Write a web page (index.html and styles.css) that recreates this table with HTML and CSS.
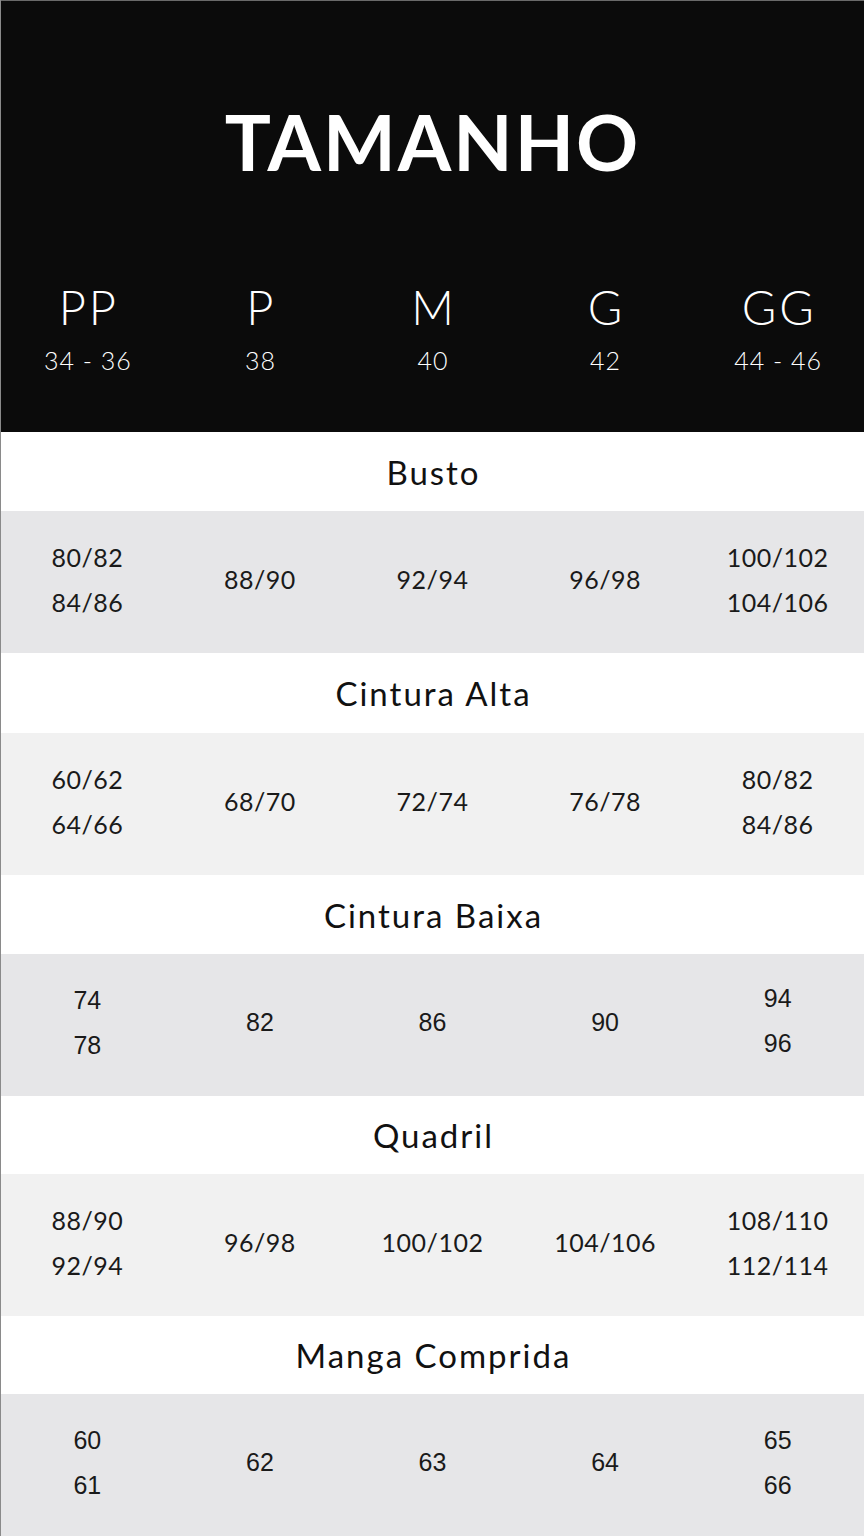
FILE: index.html
```html
<!DOCTYPE html>
<html lang="pt">
<head>
<meta charset="utf-8">
<title>Tabela de Medidas</title>
<link rel="stylesheet" href="styles.css">
</head>
<body>
<main class="chart">
  <header class="hero">
    <h1 class="hero-title">TAMANHO</h1>
    <div class="sizes">
      <div class="size"><span class="size-label">PP</span><span class="size-num">34 - 36</span></div>
      <div class="size"><span class="size-label">P</span><span class="size-num">38</span></div>
      <div class="size"><span class="size-label">M</span><span class="size-num">40</span></div>
      <div class="size"><span class="size-label">G</span><span class="size-num">42</span></div>
      <div class="size"><span class="size-label">GG</span><span class="size-num">44 - 46</span></div>
    </div>
  </header>

  <section class="measure">
    <h2 class="measure-title">Busto</h2>
    <div class="values dark">
      <div class="cell"><span>80/82</span><span>84/86</span></div>
      <div class="cell"><span>88/90</span></div>
      <div class="cell"><span>92/94</span></div>
      <div class="cell"><span>96/98</span></div>
      <div class="cell"><span>100/102</span><span>104/106</span></div>
    </div>
  </section>

  <section class="measure">
    <h2 class="measure-title t80">Cintura Alta</h2>
    <div class="values light">
      <div class="cell"><span>60/62</span><span>64/66</span></div>
      <div class="cell"><span>68/70</span></div>
      <div class="cell"><span>72/74</span></div>
      <div class="cell"><span>76/78</span></div>
      <div class="cell"><span>80/82</span><span>84/86</span></div>
    </div>
  </section>

  <section class="measure">
    <h2 class="measure-title">Cintura Baixa</h2>
    <div class="values dark arial">
      <div class="cell"><span>74</span><span>78</span></div>
      <div class="cell"><span>82</span></div>
      <div class="cell"><span>86</span></div>
      <div class="cell"><span>90</span></div>
      <div class="cell up"><span>94</span><span>96</span></div>
    </div>
  </section>

  <section class="measure">
    <h2 class="measure-title t78">Quadril</h2>
    <div class="values light">
      <div class="cell"><span>88/90</span><span>92/94</span></div>
      <div class="cell"><span>96/98</span></div>
      <div class="cell"><span>100/102</span></div>
      <div class="cell"><span>104/106</span></div>
      <div class="cell"><span>108/110</span><span>112/114</span></div>
    </div>
  </section>

  <section class="measure">
    <h2 class="measure-title t78">Manga Comprida</h2>
    <div class="values dark arial">
      <div class="cell"><span>60</span><span>61</span></div>
      <div class="cell"><span>62</span></div>
      <div class="cell"><span>63</span></div>
      <div class="cell"><span>64</span></div>
      <div class="cell"><span>65</span><span>66</span></div>
    </div>
  </section>
</main>
</body>
</html>
```

FILE: styles.css
```css
* { box-sizing: border-box; }

html, body {
  margin: 0;
  padding: 0;
  background: #ffffff;
}

body {
  font-family: Lato, "Open Sans", sans-serif;
  color: #151515;
  overflow: hidden;
}

.chart {
  width: 864px;
  border-left: 1px solid #8a8a8a;
}

.hero {
  height: 432px;
  background: #0b0b0b;
  color: #ffffff;
  border-top: 1px solid #6a6a6a;
  padding-top: 102px;
}

.hero-title {
  margin: 0;
  text-align: center;
  font-size: 77px;
  line-height: 77px;
  font-weight: 700;
  letter-spacing: 2px;
}

.sizes {
  display: grid;
  grid-template-columns: repeat(5, 1fr);
  margin-top: 104px;
}

.size {
  display: flex;
  flex-direction: column;
  align-items: center;
}

.size-label {
  font-size: 47px;
  line-height: 46px;
  font-weight: 300;
  letter-spacing: 3px;
  padding-left: 3px;
}

.size-num {
  margin-top: 18px;
  font-size: 25px;
  line-height: 25px;
  font-weight: 300;
  letter-spacing: 1px;
  padding-left: 1px;
}

.measure-title {
  margin: 0;
  height: 79px;
  display: flex;
  align-items: center;
  justify-content: center;
  font-size: 33px;
  font-weight: 400;
  letter-spacing: 2px;
  padding-left: 2px;
  color: #111;
}

.measure-title.t80 { height: 80px; }
.measure-title.t78 { height: 78px; }

.values {
  height: 142px;
  display: grid;
  grid-template-columns: repeat(5, 1fr);
}

.values.dark { background: #e6e6e8; }
.values.light { background: #f1f1f1; }

.cell {
  display: flex;
  flex-direction: column;
  align-items: center;
  justify-content: center;
  padding-bottom: 5px;
  font-size: 25px;
  line-height: 45px;
  letter-spacing: 0.5px;
  color: #1a1a1a;
}

.arial .cell {
  font-family: "Liberation Sans", Arial, sans-serif;
  letter-spacing: 0;
}

.cell.up { padding-bottom: 9px; }
```
